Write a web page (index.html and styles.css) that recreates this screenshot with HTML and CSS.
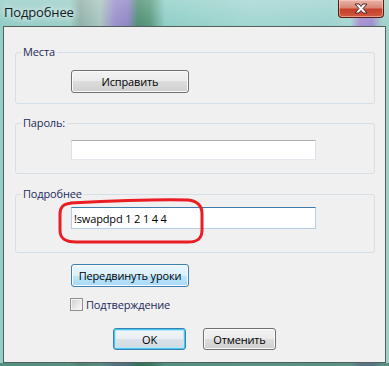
FILE: index.html
```html
<!DOCTYPE html>
<html lang="ru">
<head>
  <meta charset="UTF-8">
  <meta name="viewport" content="width=device-width, initial-scale=1.0">
  <title>Подробнее</title>
  <link rel="stylesheet" href="styles.css">
</head>
<body>
  <div class="window">
    <div class="titlebar">
      <span class="title">Подробнее</span>
      <button class="close" type="button" aria-label="Закрыть">
        <svg width="16" height="11" viewBox="0 0 16 11">
          <path d="M2 1 H6 L8 3.5 L10 1 H14 L10 5.5 L14 10 H10 L8 7.5 L6 10 H2 L6 5.5 Z" fill="#fff" stroke="#4a2a26" stroke-width="1" stroke-linejoin="round"/>
        </svg>
      </button>
    </div>

    <div class="client">
      <fieldset class="group group-places">
        <legend>Места</legend>
        <button type="button" class="btn">Исправить</button>
      </fieldset>

      <fieldset class="group group-pass">
        <legend>Пароль:</legend>
        <input type="text" class="field">
      </fieldset>

      <fieldset class="group group-more">
        <legend>Подробнее</legend>
        <input type="text" class="field field-focus" value="!swapdpd 1 2 1 4 4">
      </fieldset>

      <button type="button" class="btn btn-hot move">Передвинуть уроки</button>

      <label class="check">
        <input type="checkbox">
        <span>Подтверждение</span>
      </label>

      <div class="actions">
        <button type="button" class="btn btn-default">OK</button>
        <button type="button" class="btn">Отменить</button>
      </div>

      <!-- red hand-drawn mark over the command field -->
      <svg class="mark" width="152" height="50" viewBox="0 0 152 50">
        <path d="M14 6 C54 4, 104 2, 132 3 C142 4, 146 9, 146 17 L146 33 C146 41, 142 45, 132 45 L20 45 C8 45, 4 41, 4 33 L4 17 C4 10, 7 7, 16 6 Z" fill="none" stroke="#ea1c24" stroke-width="3"/>
      </svg>
    </div>
  </div>
</body>
</html>
```

FILE: styles.css
```css
body {
  margin: 0;
  padding: 0;
  font-family: "Open Sans", "Noto Sans", sans-serif;
  font-size: 11px;
  letter-spacing: -0.15px;
}

.window {
  box-sizing: border-box;
  width: 389px;
  height: 366px;
  padding: 0 3px 3px 3px;
  background:
    linear-gradient(0deg, rgba(30, 90, 70, 0.55) 0, rgba(30, 90, 70, 0.55) 3px, transparent 3px),
    linear-gradient(180deg, rgba(255, 255, 255, 0.2), rgba(255, 255, 255, 0) 26px),
    linear-gradient(90deg, #93cdc6 0, #9ccfc8 70px, #8fb0a8 80px, #a8c6c0 100px, #9a8fca 115px, #8e86c6 128px, #4f8f72 138px, #5a9a7e 150px, #8fcfc6 165px, #a3d6d1 250px, #9ed3cf 330px, #a7d7d2 350px, #a892cf 360px, #a08ed0 372px, #9fd1c9 382px);
}

.titlebar {
  height: 26px;
  display: flex;
  justify-content: space-between;
  align-items: flex-start;
}

.title {
  margin: 3px 0 0 1px;
  font-size: 13px;
  color: #10201e;
  text-shadow: 0 0 6px rgba(255, 255, 255, 0.9), 0 0 10px rgba(255, 255, 255, 0.7);
}

.close {
  box-sizing: border-box;
  width: 46px;
  height: 18px;
  margin-right: 2px;
  padding: 0;
  display: flex;
  align-items: center;
  justify-content: center;
  border: 1px solid #5b1a12;
  border-top: none;
  border-radius: 0 0 4px 4px;
  background: linear-gradient(180deg, #eab4a8 0, #d98776 45%, #c4402a 55%, #d15a40 100%);
  box-shadow: inset 0 0 0 1px rgba(255, 220, 210, 0.5);
}

.client {
  position: relative;
  box-sizing: border-box;
  width: 383px;
  height: 337px;
  border: 1px solid #51605d;
  background: #f0f0f0;
  overflow: hidden;
}

.group {
  width: 360px;
  box-sizing: border-box;
  margin: 0 0 0 11px;
  padding: 0;
  min-width: 0;
  border: 1px solid #d5dfe5;
  border-radius: 3px;
}

.group legend {
  margin-left: 5px;
  padding: 0 2px;
  line-height: 14px;
  color: #1b2a5a;
}

.group-places {
  margin-top: 18px;
  padding: 11px 0 10px 0;
}

.group-pass {
  margin-top: 12px;
  padding: 10px 0 13px 0;
}

.group-more {
  margin-top: 13px;
  padding: 6px 0 23px 0;
}

.group .btn,
.group .field {
  margin-left: 55px;
}

.btn {
  display: block;
  box-sizing: border-box;
  width: 118px;
  height: 23px;
  padding: 0;
  font: inherit;
  letter-spacing: inherit;
  color: #000;
  border: 1px solid #707070;
  border-radius: 3px;
  background: linear-gradient(180deg, #f2f2f2 0, #ebebeb 50%, #dddddd 50%, #cfcfcf 100%);
  box-shadow: inset 0 0 0 1px #fbfbfb;
}

.btn-hot {
  border-color: #3c7fb1;
  background: linear-gradient(180deg, #eaf6fd 0, #d9f0fc 50%, #bee6fd 50%, #a7d9f5 100%);
}

.btn-default {
  border-color: #3c7fb1;
  background: linear-gradient(180deg, #f2f6f8 0, #e8eef2 50%, #dae3e9 50%, #cfd9e0 100%);
  box-shadow: inset 0 0 0 1px #48c6f3, inset 0 0 0 2px #b7e8fa;
}

.field {
  display: block;
  box-sizing: border-box;
  width: 245px;
  height: 20px;
  margin: 0;
  padding: 0 2px;
  font: inherit;
  letter-spacing: inherit;
  color: #000;
  background: #fff;
  border: 1px solid #dbdfe6;
  border-top-color: #abadb3;
  border-bottom-color: #e3e9ef;
  outline: none;
}

.field-focus {
  height: 22px;
  border-color: #b5cfe7;
  border-top-color: #3d7bad;
}

.move {
  margin: 11px 0 0 67px;
}

.check {
  display: flex;
  align-items: center;
  gap: 3px;
  height: 15px;
  margin: 10px 0 0 66px;
  color: #1b2a5a;
}

.check input {
  appearance: none;
  box-sizing: border-box;
  width: 13px;
  height: 13px;
  margin: 0;
  border: 1px solid #8e8f8f;
  background: linear-gradient(135deg, #cbcfd5 0, #eeeeee 70%, #f7f7f7 100%);
  box-shadow: inset 0 0 0 1px #f4f4f4;
}

.actions {
  display: flex;
  gap: 17px;
  margin: 16px 0 0 109px;
}

.actions .btn {
  width: 73px;
  height: 22px;
}

.mark {
  position: absolute;
  left: 52px;
  top: 170px;
}
```
